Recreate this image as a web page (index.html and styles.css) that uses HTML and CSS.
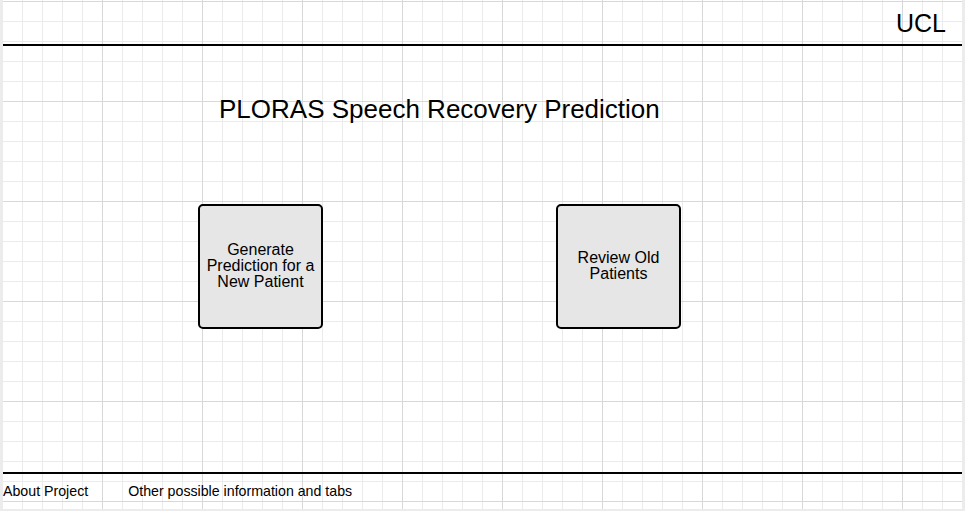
FILE: index.html
```html
<!DOCTYPE html>
<html lang="en">
<head>
<meta charset="utf-8">
<title>PLORAS Speech Recovery Prediction</title>
<link rel="stylesheet" href="styles.css">
</head>
<body>
<div class="canvas">
  <header class="topbar">
    <span class="brand">UCL</span>
  </header>
  <main class="main">
    <h1 class="title">PLORAS Speech Recovery Prediction</h1>
    <div class="actions">
      <div class="action">Generate Prediction for a New Patient</div>
      <div class="action">Review Old Patients</div>
    </div>
  </main>
  <footer class="footer">
    <span class="footer-link">About Project</span>
    <span class="footer-link">Other possible information and tabs</span>
  </footer>
</div>
</body>
</html>
```
FILE: styles.css
```css
html, body {
  margin: 0;
  padding: 0;
}
body {
  background: #ececec;
  font-family: "Liberation Sans", Arial, sans-serif;
  color: #000;
  width: 965px;
  height: 511px;
  overflow: hidden;
}
.canvas {
  margin-left: 3px;
  width: 959px;
  height: 509px;
  display: flex;
  flex-direction: column;
  background-color: #fff;
  background-image:
    linear-gradient(to right, #d8d8d8 1px, transparent 1px),
    linear-gradient(to bottom, #d8d8d8 1px, transparent 1px),
    linear-gradient(to right, #ebebeb 1px, transparent 1px),
    linear-gradient(to bottom, #ebebeb 1px, transparent 1px);
  background-size: 100px 100px, 100px 100px, 20px 20px, 20px 20px;
  background-position: 99px 0, 0 101px, 19px 0, 0 1px;
}
.topbar {
  height: 46px;
  box-sizing: border-box;
  padding: 9px 16px 0 0;
  border-bottom: 2px solid #000;
  display: flex;
  justify-content: flex-end;
}
.brand {
  font-size: 25px;
  line-height: 28px;
}
.main {
  flex: 1;
  padding: 48px 0 0 195px;
}
.title {
  margin: 0 0 0 21px;
  font-size: 26px;
  line-height: 30px;
  font-weight: normal;
}
.actions {
  margin-top: 80px;
  display: flex;
  gap: 233px;
}
.action {
  width: 125px;
  height: 125px;
  box-sizing: border-box;
  border: 2px solid #000;
  border-radius: 5px;
  background: #e6e6e6;
  display: flex;
  align-items: center;
  justify-content: center;
  text-align: center;
  padding: 0 5px 2px;
  font-size: 16px;
  line-height: 16px;
}
.footer {
  height: 37px;
  box-sizing: border-box;
  border-top: 2px solid #000;
  padding-top: 9px;
  display: flex;
  gap: 40px;
  font-size: 14.2px;
  line-height: 16px;
}
```
